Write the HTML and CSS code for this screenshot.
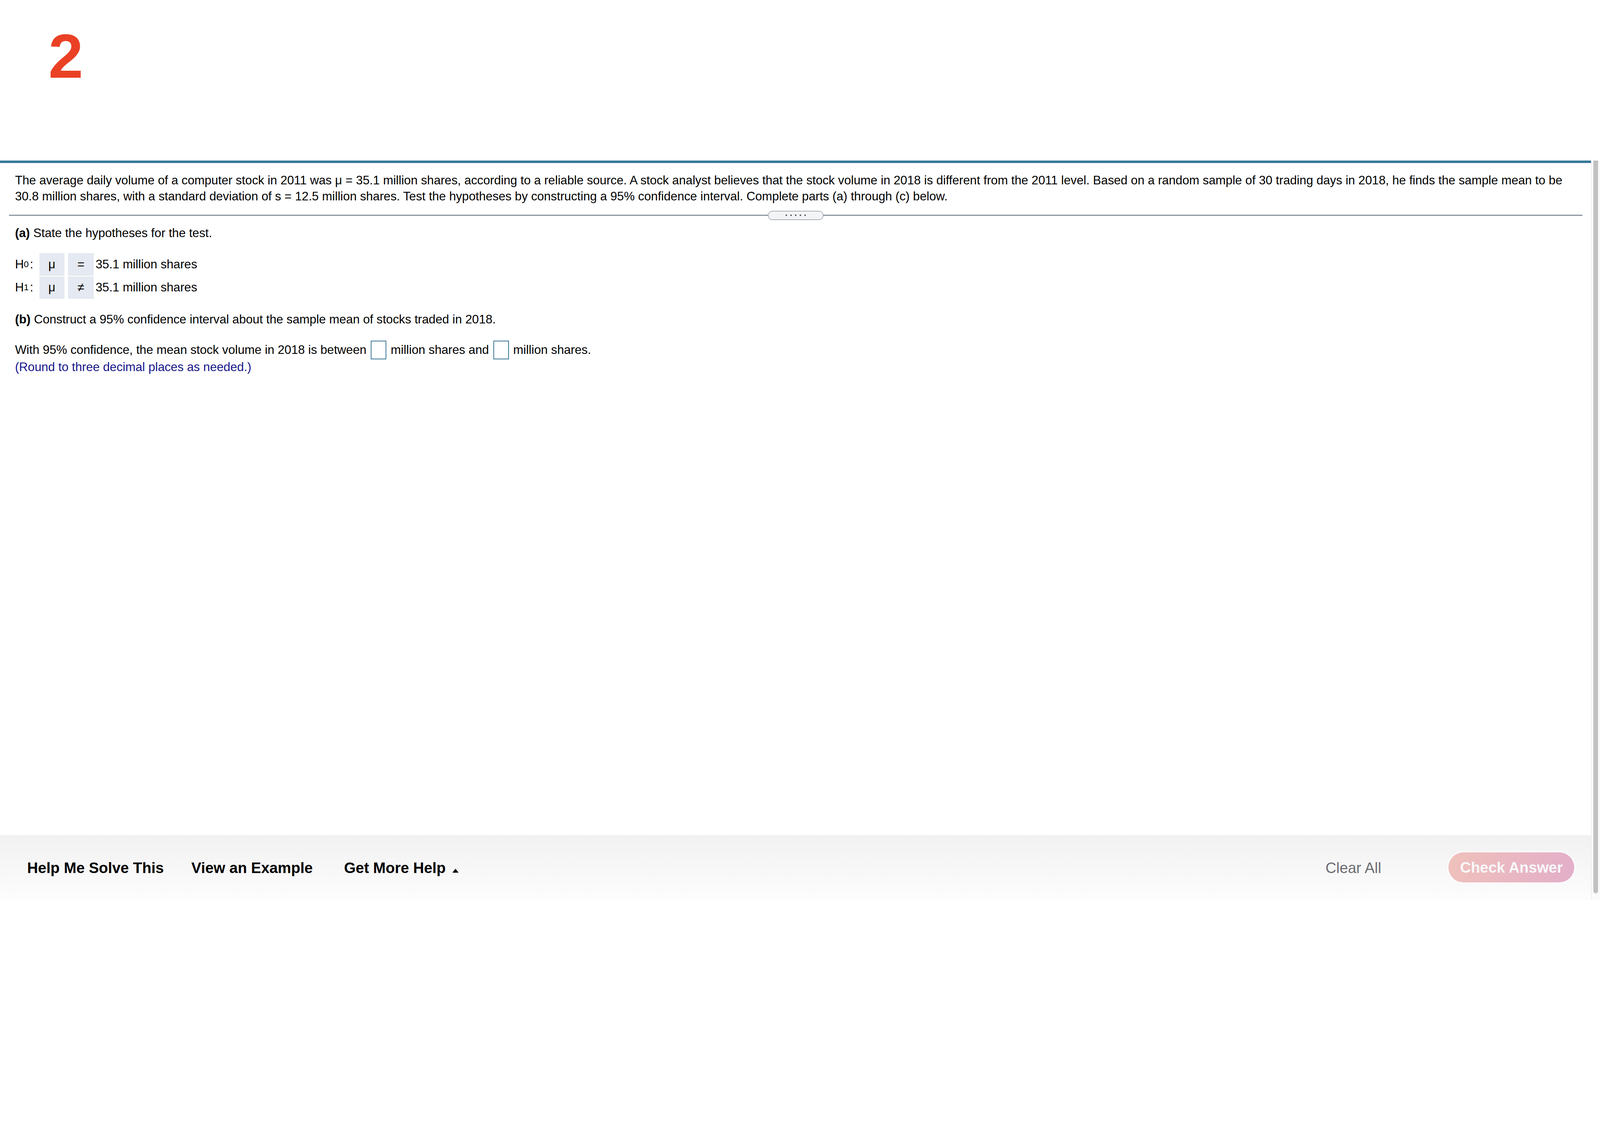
FILE: index.html
```html
<!DOCTYPE html>
<html lang="en">
<head>
  <meta charset="UTF-8" />
  <meta name="viewport" content="width=device-width, initial-scale=1.0"/>
  <title>Question 2</title>
  <link rel="stylesheet" href="styles.css">
</head>
<body>
  <div class="page">

    <!-- Question number -->
    <header class="q-header">
      <div class="q-number">2</div>
    </header>

    <div class="q-body">
      <main class="q-main">
        <div class="q-content">
          <p class="q-stem">The average daily volume of a computer stock in 2011 was μ = 35.1 million shares, according to a reliable source. A stock analyst believes that the stock volume in 2018 is different from the 2011 level. Based on a random sample of 30 trading days in 2018, he finds the sample mean to be 30.8 million shares, with a standard deviation of s = 12.5 million shares. Test the hypotheses by constructing a 95% confidence interval. Complete parts (a) through (c) below.</p>

          <div class="divider">
            <span class="grip"><i></i><i></i><i></i><i></i><i></i></span>
          </div>

          <p class="part-title"><b>(a)</b> State the hypotheses for the test.</p>

          <div class="hyp">
            <div class="hyp-row">
              <div class="hyp-label">H<sub>0</sub>:</div>
              <div class="cell">μ</div>
              <div class="cell op">=</div>
              <div class="hyp-value">35.1 million shares</div>
            </div>
            <div class="hyp-row">
              <div class="hyp-label">H<sub>1</sub>:</div>
              <div class="cell">μ</div>
              <div class="cell op">≠</div>
              <div class="hyp-value">35.1 million shares</div>
            </div>
          </div>

          <p class="part-title part-b"><b>(b)</b> Construct a 95% confidence interval about the sample mean of stocks traded in 2018.</p>

          <p class="answer-line">With 95% confidence, the mean stock volume in 2018 is between <span class="answer-box"></span> million shares and <span class="answer-box"></span> million shares.<br>
            <span class="hint">(Round to three decimal places as needed.)</span></p>
        </div>

        <footer class="q-footer">
          <a class="help-link">Help Me Solve This</a>
          <a class="help-link">View an Example</a>
          <a class="help-link more">Get More Help <span class="caret"></span></a>
          <a class="clear-all">Clear All</a>
          <button class="check-btn">Check Answer</button>
        </footer>
      </main>

      <div class="scrollbar"><div class="thumb"></div></div>
    </div>
  </div>
</body>
</html>
```

FILE: styles.css
```css
:root {
  --blue: #337898;
  --rule: #5f6b78;
  --cell: #e5e9f1;
  --text: #000;
}

body {
  margin: 0;
  padding: 0;
  font-family: "Liberation Sans", Arial, sans-serif;
  color: var(--text);
  background: #fff;
}

.page {
  width: 4096px;
  height: 2304px;
  display: flex;
  flex-direction: column;
  overflow: hidden;
}

/* header with question number */
.q-header {
  height: 411px;
  flex-shrink: 0;
  padding: 64px 0 0 124px;
  box-sizing: border-box;
}

.q-number {
  font-size: 160px;
  line-height: 160px;
  font-weight: bold;
  color: #ea4125;
}

.q-body {
  flex: 1;
  display: flex;
  min-height: 0;
}

.q-main {
  flex: 1;
  display: flex;
  flex-direction: column;
  border-top: 6.4px solid var(--blue);
}

.q-content {
  border-top: 1.6px solid #cacfe0;
  padding: 24px 22px 0 38.4px;
  font-size: 31.2px;
  line-height: 40.8px;
}

.q-content p {
  margin: 0;
}

/* divider with grip */
.divider {
  display: flex;
  align-items: center;
  margin: 16px 0 0 -15.2px;
}

.divider::before,
.divider::after {
  content: "";
  flex: 1;
  height: 1.6px;
  background: var(--rule);
}

.grip {
  width: 142px;
  height: 23px;
  box-sizing: border-box;
  border: 1.6px solid var(--rule);
  border-radius: 12px;
  background: #f3f4f6;
  display: flex;
  align-items: center;
  justify-content: center;
  gap: 7.2px;
}

.grip i {
  width: 4.8px;
  height: 4.8px;
  border-radius: 50%;
  background: #4b4f55;
}

.part-title {
  margin-top: 14px !important;
}

.part-b {
  margin-top: 33px !important;
}

/* hypotheses */
.hyp {
  margin-top: 31px;
  display: flex;
  flex-direction: column;
  gap: 1.6px;
}

.hyp-row {
  display: flex;
  height: 57.6px;
}

.hyp-label {
  width: 62.4px;
  display: flex;
  align-items: center;
}

.hyp-label sub {
  font-size: 22.4px;
  line-height: 0;
  vertical-align: -9px;
  margin-right: 3px;
}

.cell {
  width: 64px;
  background: var(--cell);
  display: flex;
  align-items: center;
  justify-content: center;
}

.cell.op {
  width: 65.6px;
  margin-left: 9.6px;
}

.hyp-value {
  margin-left: 4.8px;
  display: flex;
  align-items: center;
}

/* answer line */
.answer-line {
  margin-top: 32.8px !important;
}

.answer-box {
  display: inline-block;
  width: 40px;
  height: 48px;
  box-sizing: border-box;
  border: 2.4px solid #3a7797;
  vertical-align: -14.4px;
  margin: 0 2.4px;
  background: #fff;
}

.hint {
  color: #16168a;
}

/* footer */
.q-footer {
  margin-top: auto;
  height: 166.4px;
  box-sizing: border-box;
  padding: 3.2px 42.4px 0 69.6px;
  display: flex;
  align-items: center;
  background: linear-gradient(#f1f1f1, #fdfdfd);
  font-size: 38.4px;
}

.help-link {
  font-weight: bold;
  color: #000;
  margin-right: 70.4px;
  white-space: nowrap;
}

.help-link.more {
  margin-left: 9.6px;
}

.caret {
  display: inline-block;
  width: 0;
  height: 0;
  border-left: 8.8px solid transparent;
  border-right: 8.8px solid transparent;
  border-bottom: 10.4px solid #000;
  margin-left: 6.4px;
  vertical-align: 1.6px;
}

.clear-all {
  margin-left: auto;
  color: #6b6d72;
}

.check-btn {
  margin-left: 172px;
  margin-top: -3.2px;
  height: 76.8px;
  padding: 0 29.6px;
  border: none;
  border-radius: 38.4px;
  font-family: inherit;
  font-size: 38.4px;
  font-weight: bold;
  color: #f8f8fa;
  background: linear-gradient(100deg, #efc1bb, #e3aec9);
  box-shadow: 0 0 4.8px 2.4px rgba(255, 255, 255, 0.8);
}

/* scrollbar */
.scrollbar {
  width: 23.2px;
  box-sizing: border-box;
  border-left: 0.8px solid #e6e6e6;
  background: #fafafa;
  padding-left: 4.8px;
}

.thumb {
  width: 12.8px;
  height: 1876px;
  background: #c1c1c1;
  border-radius: 0 0 6.4px 6.4px;
}
```
